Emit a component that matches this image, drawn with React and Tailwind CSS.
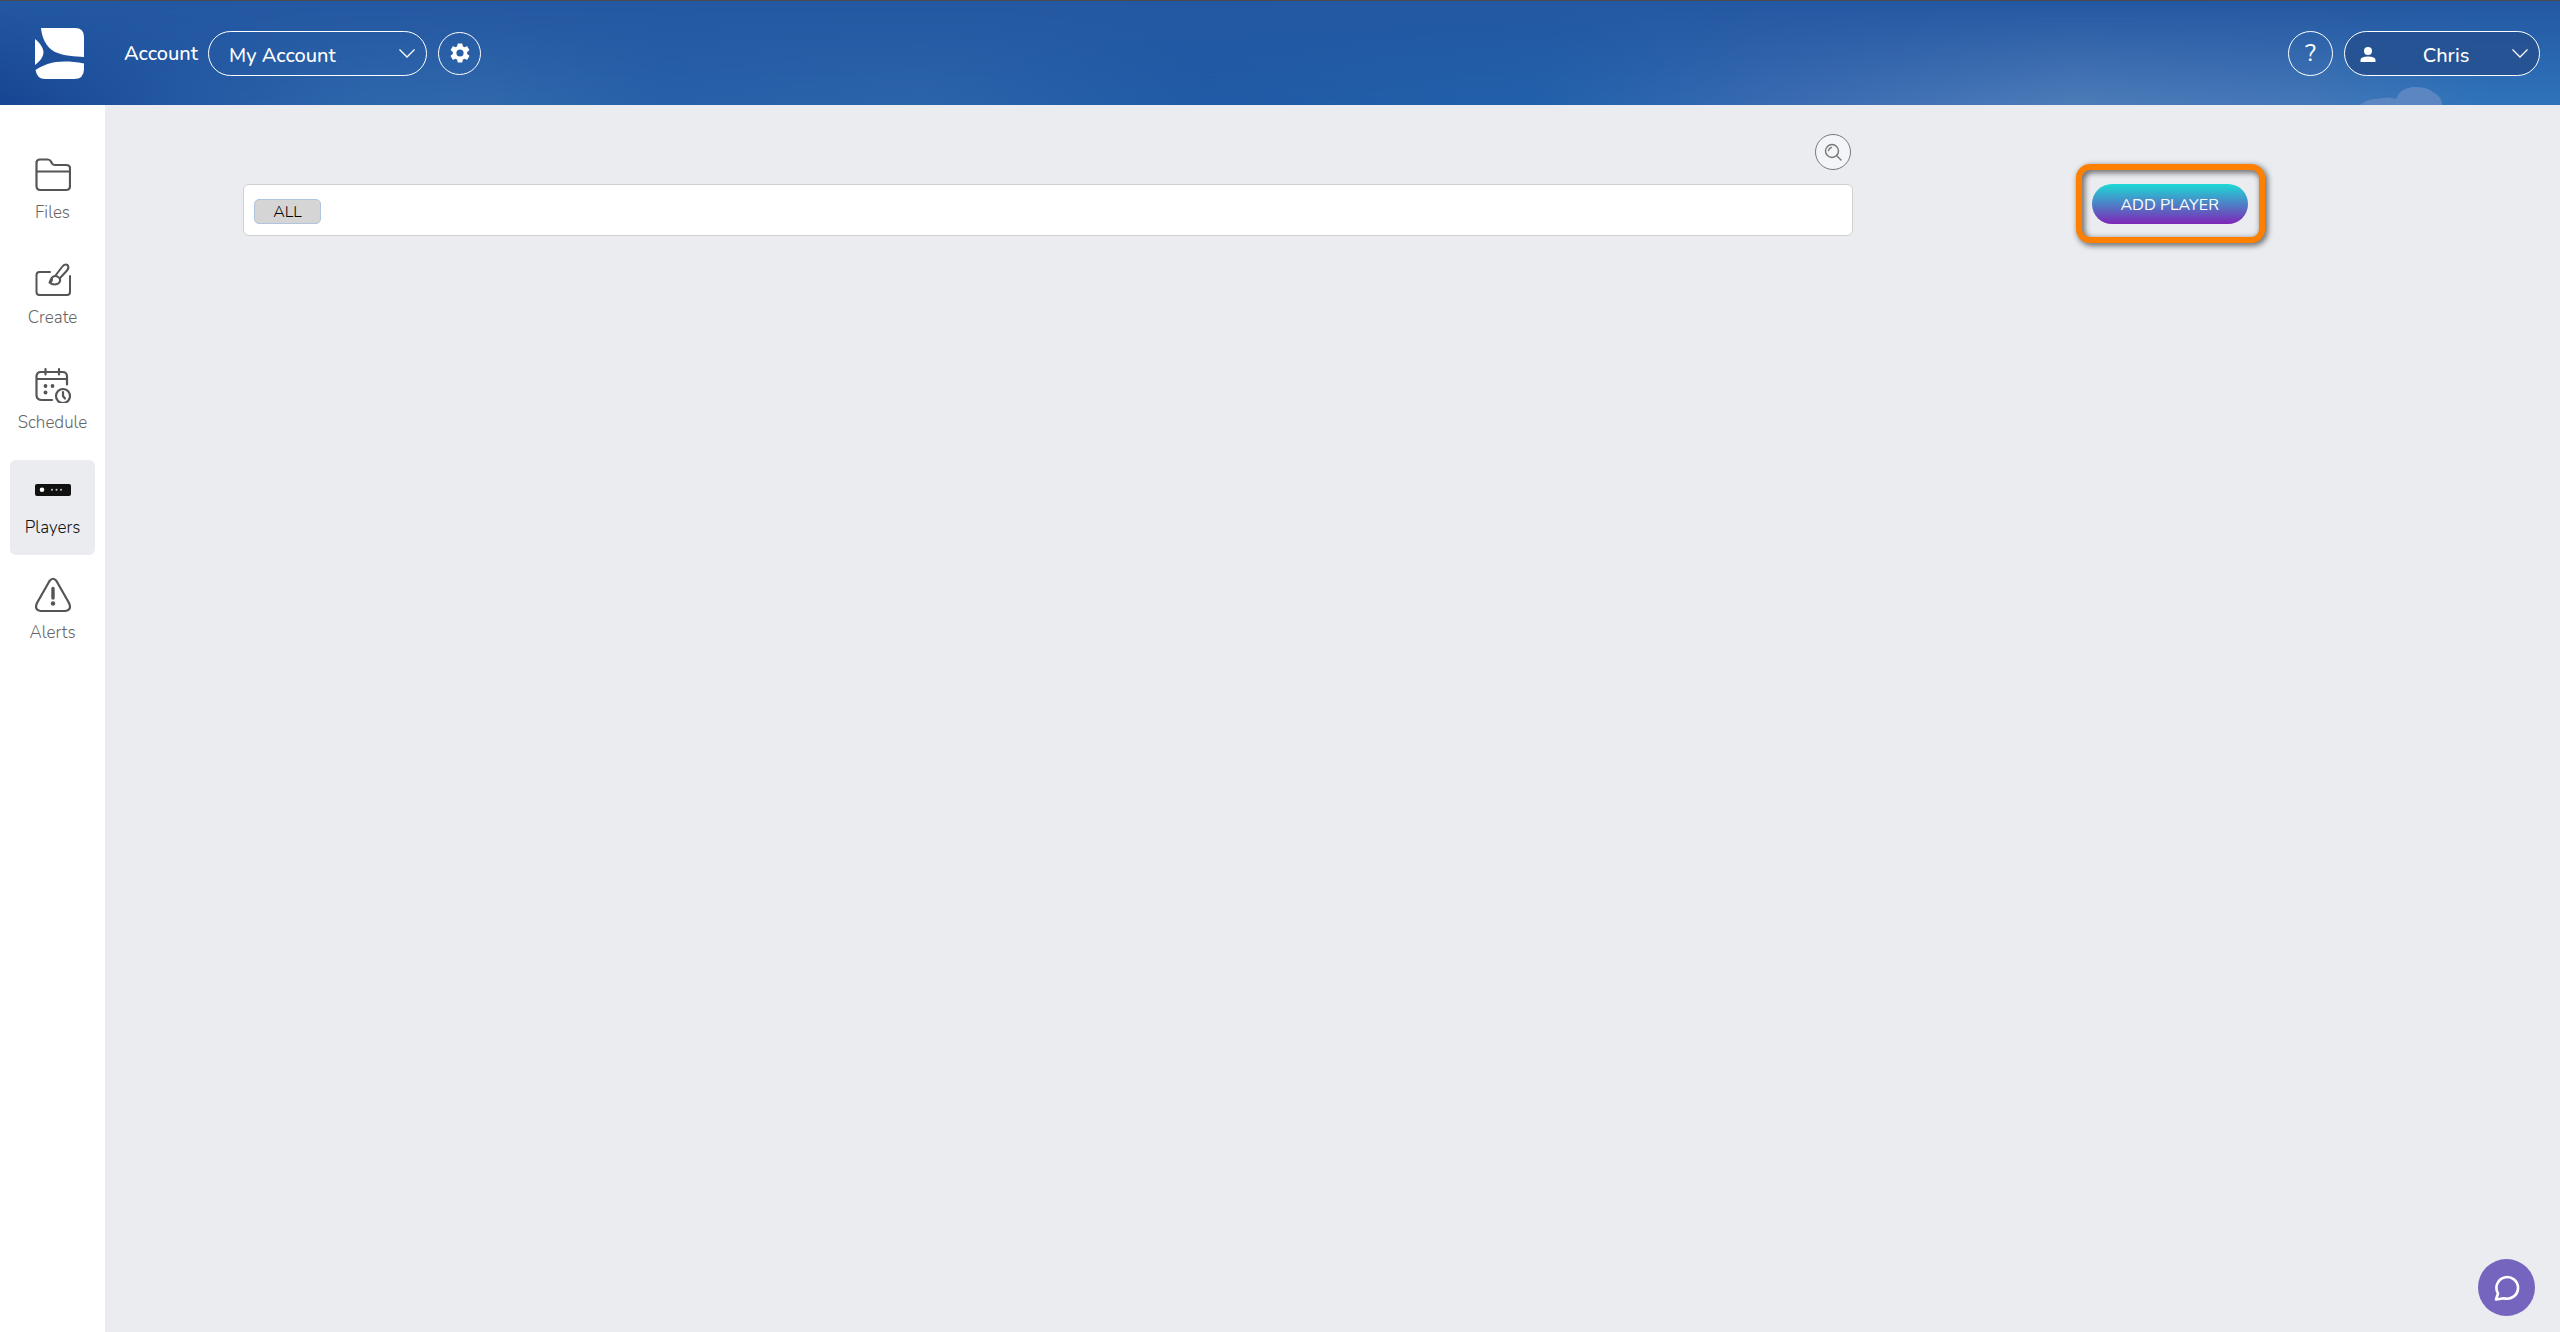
import { clsx } from 'clsx'

const navItems = [
  { label: 'Files', Icon: FilesIcon },
  { label: 'Create', Icon: CreateIcon },
  { label: 'Schedule', Icon: ScheduleIcon },
  { label: 'Players', Icon: PlayersIcon, active: true },
  { label: 'Alerts', Icon: AlertsIcon },
]

function Logo() {
  return (
    <svg viewBox="0 0 49 51" className="h-[51px] w-[49px] fill-white" aria-hidden="true">
      <path d="M6 0H40Q49 0 49 9V29C40 28.5 29 28 20 24C10 18.5 7 9 6 0Z" />
      <path d="M0 11C6 16 8 20 8.500 24C8.500 29 5 33 0 37Z" />
      <path d="M0.500 42C12 35 24 31 49 35.500V41Q49 51 39 51H10Q2 51 0.500 42Z" />
    </svg>
  )
}

function FilesIcon() {
  return (
    <svg viewBox="0 0 36 36" className="size-9" fill="none" stroke="currentColor" strokeWidth="2.200" strokeLinejoin="round">
      <path d="M1.500 29V6Q1.500 2.500 5 2.500H12.500Q15 2.500 16 4.500L17 6.500Q18 8 20 8H31Q35 8 35 11.500V29Q35 33 31 33H5.500Q1.500 33 1.500 29Z" />
      <path d="M1.500 14.500H35" />
    </svg>
  )
}

function CreateIcon() {
  return (
    <svg viewBox="0 0 36 36" className="size-9" fill="none" stroke="currentColor" strokeWidth="2" strokeLinecap="round" strokeLinejoin="round">
      <path d="M15 10H4.500Q1.500 10 1.500 13V30Q1.500 33 4.500 33H32Q35 33 35 30V14" />
      <path d="M14.500 20.500C16 15 19 13 22.500 14.500C27 17 25.500 22 20 22.500Q16.500 22.500 14.500 20.500Q17 20 17 17" />
      <path d="M20.500 13.500L27 5Q29.500 1.500 32.500 3Q34.500 5.500 32 8.500L25.500 15.500" />
    </svg>
  )
}

function ScheduleIcon() {
  return (
    <svg viewBox="0 0 36 36" className="size-9" fill="none" stroke="currentColor" strokeWidth="2.200" strokeLinecap="round">
      <path d="M17 33H7Q1.500 33 1.500 28V9.500Q1.500 5 6 5H27.500Q32 5 32 9.500V17.500M2 12H32M10.500 2V7.500M24 2V7.500" />
      <circle cx="28" cy="29" r="7" />
      <path d="M28 25V29L30 31.500" />
      <g fill="currentColor" stroke="none">
        <circle cx="10.500" cy="19" r="1.900" />
        <circle cx="17.500" cy="19" r="1.900" />
        <circle cx="10.500" cy="25.500" r="1.900" />
      </g>
    </svg>
  )
}

function PlayersIcon() {
  return (
    <svg viewBox="0 0 36 36" className="size-9">
      <rect y="12" width="36" height="12" rx="2" fill="#111" />
      <circle cx="7" cy="17.800" r="2.300" fill="#fff" />
      <g fill="#ccc">
        <circle cx="17" cy="17.800" r="1" />
        <circle cx="21.500" cy="17.800" r="1" />
        <circle cx="26" cy="17.800" r="1" />
      </g>
    </svg>
  )
}

function AlertsIcon() {
  return (
    <svg viewBox="0 0 36 36" className="size-9" fill="none" stroke="currentColor" strokeWidth="2.200" strokeLinejoin="round" strokeLinecap="round">
      <path d="M14.500 4Q18 -0.500 21.500 4L34 26Q37 33 30.500 34H5.500Q-1 33 2 26Z" />
      <path d="M18 11.500V21" strokeWidth="3.400" />
      <circle cx="18" cy="26.500" r="2.200" fill="currentColor" stroke="none" />
    </svg>
  )
}

function Chevron() {
  return (
    <svg viewBox="0 0 16 9" className="h-[9px] w-4" fill="none" stroke="currentColor" strokeWidth="1.300">
      <path d="M0.500 0.500L8 8L15.500 0.500" />
    </svg>
  )
}

function Header() {
  return (
    <header className="relative flex h-[105px] items-center border-t border-[#4a4a4a] bg-[#2458a2] text-white">
      {/* sky: horizontal colour bands fading out towards the top */}
      <div className="absolute inset-0 bg-[linear-gradient(to_right,#164592,#2458a2_7%,#2e66ab_14%,#3168ab_19%,#2860a9_26%,#2c64aa_36%,#215aa6_47%,#2260ab_60%,#3a6cb2_70%,#4d7cb8_81%,#4478b8_90%,#2f74bb_97%,#2f74bb)] mask-t-from-0%" />
      <svg viewBox="0 0 84 18" className="absolute right-[116px] bottom-0 h-[18px] w-[84px]" fill="#5b86c1" aria-hidden="true">
        <path d="M0 18Q8 11 17 12Q28 9 36 12Q40 1 53 0Q68 0 73 5Q82 9 82 18Z" />
      </svg>
      <div className="relative flex w-full items-center pr-5 pl-[35px]">
        <a href="#" aria-label="Home">
          <Logo />
        </a>
        <label htmlFor="account" className="ml-10 w-[84px] pt-px text-xl font-medium">
          Account
        </label>
        <div className="relative">
          <select id="account" className="h-[45px] w-[219px] appearance-none rounded-full border border-white bg-transparent pt-[6px] pl-5 text-xl font-medium outline-none">
            <option>My Account</option>
          </select>
          <span className="pointer-events-none absolute top-[18px] right-3">
            <Chevron />
          </span>
        </div>
        <button type="button" aria-label="Settings" className="ml-[11px] flex size-[43px] items-center justify-center rounded-full border border-white">
          <svg viewBox="2 2 20 20" className="size-5" fill="currentColor">
            <path d="M19.140 12.940c.04-.3.060-.61.060-.94s-.02-.64-.07-.94l2.030-1.580a.49.490 0 0 0 .12-.61l-1.920-3.320a.49.490 0 0 0-.59-.22l-2.390.96c-.5-.38-1.030-.7-1.620-.94l-.36-2.540a.48.480 0 0 0-.48-.41h-3.840a.48.480 0 0 0-.47.410l-.36 2.540c-.59.240-1.130.57-1.620.94l-2.390-.96a.48.480 0 0 0-.59.220L2.740 8.870c-.12.210-.08.470.12.610l2.030 1.580c-.05.300-.09.630-.09.940s.02.640.07.940l-2.030 1.580a.49.490 0 0 0-.12.610l1.920 3.320c.12.220.37.290.59.220l2.390-.96c.5.380 1.030.7 1.620.94l.36 2.540c.05.240.24.410.48.410h3.840c.24 0 .44-.17.470-.41l.36-2.540c.59-.24 1.130-.56 1.620-.94l2.390.96c.22.080.47 0 .59-.22l1.920-3.320a.48.480 0 0 0-.12-.61zM12 15.600A3.600 3.600 0 1 1 12 8.400a3.600 3.600 0 0 1 0 7.200z" />
          </svg>
        </button>
        <button type="button" aria-label="Help" className="ml-auto flex size-[45px] items-center justify-center rounded-full border border-white text-2xl">
          ?
        </button>
        <div className="relative ml-[11px]">
          <span className="pointer-events-none absolute top-4 left-4">
            <svg viewBox="0 0 16 16" className="size-4" fill="currentColor">
              <circle cx="8" cy="4" r="4" />
              <path d="M0.500 15V13Q0.500 9.500 8 9.500T15.500 13V15Z" />
            </svg>
          </span>
          <select aria-label="User" className="h-[45px] w-[196px] appearance-none rounded-full border border-white bg-[#265190]/90 pt-[6px] pl-2 text-center text-xl font-medium outline-none">
            <option>Chris</option>
          </select>
          <span className="pointer-events-none absolute top-[18px] right-3">
            <Chevron />
          </span>
        </div>
      </div>
    </header>
  )
}

function Sidebar() {
  return (
    <nav className="flex w-[105px] shrink-0 flex-col items-center gap-[10px] bg-white pt-10">
      {navItems.map(({ label, Icon, active }) => (
        <a
          key={label}
          href="#"
          aria-current={active ? 'page' : undefined}
          className={clsx(
            'flex h-[95px] w-[85px] flex-col items-center rounded-md pt-3',
            active ? 'bg-[#ebecf0] text-[#111]' : 'text-[#555]'
          )}
        >
          <Icon />
          <span className={clsx('mt-2 text-[17px] leading-6 font-light', !active && 'text-[#666]')}>{label}</span>
        </a>
      ))}
    </nav>
  )
}

function Players() {
  return (
    <main className="grid flex-1 grid-cols-[28fr_11fr] items-start bg-[#ebecf0] pr-[74px] pl-[138px]">
      <section className="flex flex-col pt-[29px]">
        <button type="button" aria-label="Search" className="mr-[2px] flex size-9 items-center justify-center self-end rounded-full border border-[#777] bg-[#f3f5f8] text-[#777]">
          <svg viewBox="0 0 18 18" className="size-[18px]" fill="none" stroke="currentColor" strokeWidth="1.400" strokeLinecap="round">
            <circle cx="8" cy="8" r="6.500" />
            <path d="M12.500 12.500L17 17M4.500 7.500Q5 5 7.500 4.500" />
          </svg>
        </button>
        <div className="mt-[14px] flex h-[52px] items-center rounded-md border border-[#d0d0d0] bg-white px-[10px]">
          <button type="button" className="mt-[3px] flex h-[25px] w-[67px] items-center justify-center rounded-[5px] border border-[#b0c4de] bg-[#d5d5d5] text-base font-light text-black">
            ALL
          </button>
        </div>
      </section>
      <div className="flex justify-center pt-[79px]">
        <div className="relative">
          <button type="button" className="h-10 w-[156px] rounded-full bg-linear-to-b/srgb from-[#1cdbd5] to-[#7f26b7] pt-px text-base text-white">
            ADD PLAYER
          </button>
          <div className="pointer-events-none absolute -top-5 -right-[17px] -bottom-[19px] -left-4 rounded-[14px] border-6 border-[#ff8000] drop-shadow-[2px_2px_3px_#000000b0]" />
        </div>
      </div>
    </main>
  )
}

export default function App() {
  return (
    <div className="flex min-h-screen flex-col font-['Nunito','Lato',sans-serif]">
      <Header />
      <div className="flex flex-1">
        <Sidebar />
        <Players />
      </div>
      <button type="button" aria-label="Open chat" className="fixed right-[25px] bottom-4 flex size-[57px] items-center justify-center rounded-full bg-[#7565be] text-white">
        <svg viewBox="0 0 26 26" className="size-[26px]" fill="none" stroke="currentColor" strokeWidth="2.600" strokeLinejoin="round">
          <path d="M2 24.500L4 18.500A10.800 10.800 0 1 1 10 23.200Z" />
        </svg>
      </button>
    </div>
  )
}
